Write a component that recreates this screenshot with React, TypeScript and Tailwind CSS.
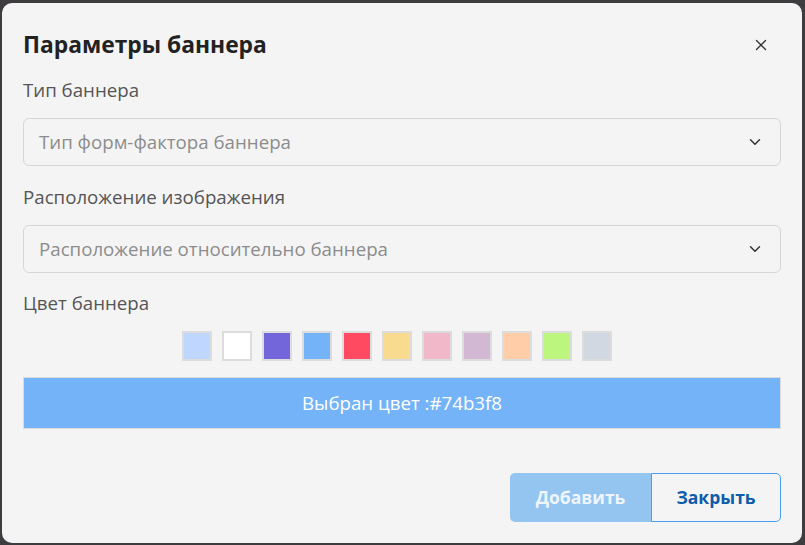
import { X, ChevronDown } from 'lucide-react';

const colors = [
  '#bfd7ff',
  '#ffffff',
  '#7366da',
  '#74b3f8',
  '#ff4a62',
  '#f8db8e',
  '#f0b8c9',
  '#d3b8d3',
  '#ffcda8',
  '#bcf67e',
  '#d2d8e2',
];

function Select({ placeholder }: { placeholder: string }) {
  return (
    <div className="h-[48px] flex items-center justify-between pl-[15px] pr-[16px] border border-[#d6d6d6] rounded-[6px] bg-[#f4f4f4]">
      <span className="text-[18.7px] text-[#8c8c8c]">{placeholder}</span>
      <ChevronDown className="w-[18px] h-[18px] text-[#333]" strokeWidth={2} />
    </div>
  );
}

export default function App() {
  const selected = '#74b3f8';
  return (
    <div
      className="w-[805px] h-[545px] bg-[#3e3c3f] pl-[2px] pt-[3px]"
      style={{ fontFamily: '"Open Sans", "Noto Sans", sans-serif' }}
    >
      <div className="w-[800px] h-[540px] bg-[#f4f4f4] rounded-[10px] pl-[21px] pr-[21px] pt-[28px] pb-[21px] flex flex-col">
        {/* заголовок */}
        <div className="flex items-center justify-between h-[28px]">
          <h2 className="text-[22.8px] font-bold text-[#222] leading-[28px]">Параметры баннера</h2>
          <X className="w-[18px] h-[18px] text-[#333] mr-[11px]" strokeWidth={1.8} />
        </div>

        <label className="mt-[19px] text-[18.7px] leading-[24px] text-[#555]">Тип баннера</label>
        <div className="mt-[16px]">
          <Select placeholder="Тип форм-фактора баннера" />
        </div>

        <label className="mt-[19px] text-[18.7px] leading-[24px] text-[#555]">Расположение изображения</label>
        <div className="mt-[16px]">
          <Select placeholder="Расположение относительно баннера" />
        </div>

        <label className="mt-[18px] text-[18.7px] leading-[24px] text-[#555]">Цвет баннера</label>
        <div className="mt-[16px] flex justify-center">
          {colors.map((c) => (
            <div
              key={c}
              className="w-[30px] h-[30px] mr-[10px] border-2 border-[#dcdcdc]"
              style={{ backgroundColor: c }}
            />
          ))}
        </div>

        <div
          className="mt-[16px] h-[52px] flex items-center justify-center border border-[#dcdcdc] text-white text-[18.7px]"
          style={{ backgroundColor: selected }}
        >
          Выбран цвет :{selected}
        </div>

        {/* кнопки */}
        <div className="mt-auto flex justify-end">
          <button className="w-[141px] h-[49px] bg-[#94c4f0] text-[#eef5fc] text-[17.5px] font-bold rounded-l-[5px]">
            Добавить
          </button>
          <button className="w-[130px] h-[49px] border border-[#4a9ef0] text-[#0f5cab] text-[17.5px] font-bold rounded-r-[5px] bg-[#f4f4f4]">
            Закрыть
          </button>
        </div>
      </div>
    </div>
  );
}
